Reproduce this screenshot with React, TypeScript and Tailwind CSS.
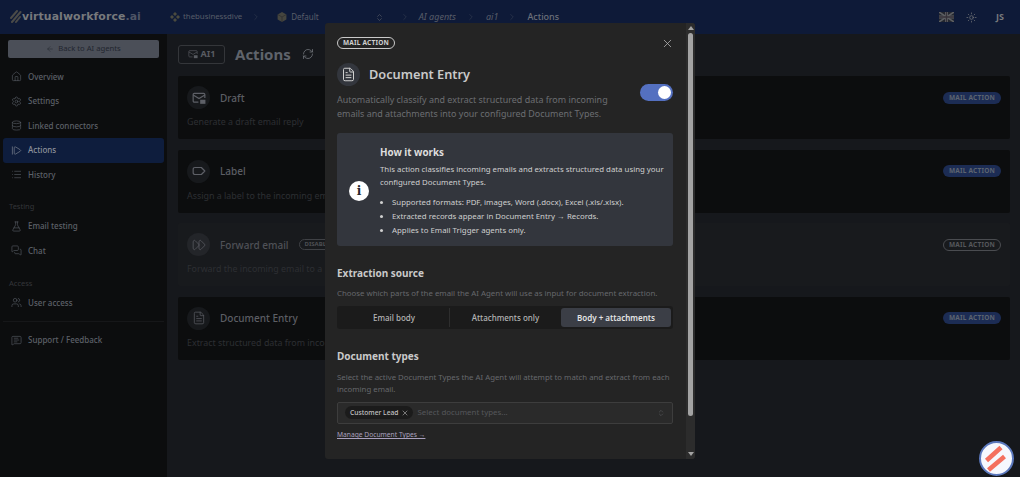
import React from 'react';
import {
  ArrowLeft,
  ChevronRight,
  ChevronsUpDown,
  Database,
  FastForward,
  FileText,
  FlaskConical,
  House,
  List,
  MessageSquareText,
  MessagesSquare,
  RefreshCw,
  Settings,
  StepForward,
  Sun,
  Users,
  X,
} from 'lucide-react';

type IconProps = { size?: number; strokeWidth?: number; className?: string };

function MailAiIcon({ size = 12, strokeWidth = 1.4, className }: IconProps) {
  return (
    <svg width={size} height={size} viewBox="0 0 24 24" fill="none" stroke="currentColor" strokeWidth={strokeWidth * 1.7} className={className}>
      <path d="M11 19H4a2 2 0 0 1-2-2V6a2 2 0 0 1 2-2h16a2 2 0 0 1 2 2v6" />
      <path d="M2 7l10 6 10-6" />
      <rect x="14" y="15" width="9" height="7" fill="currentColor" stroke="none" />
    </svg>
  );
}

function LabelIcon({ size = 12, strokeWidth = 1.4, className }: IconProps) {
  return (
    <svg width={size} height={size} viewBox="0 0 24 24" fill="none" stroke="currentColor" strokeWidth={strokeWidth * 1.7} className={className}>
      <path d="M5 6h11l6 6-6 6H5a3 3 0 0 1-3-3V9a3 3 0 0 1 3-3z" strokeLinejoin="round" />
    </svg>
  );
}

const navTop = [
  { label: 'Overview', icon: House },
  { label: 'Settings', icon: Settings },
  { label: 'Linked connectors', icon: Database },
  { label: 'Actions', icon: StepForward, active: true },
  { label: 'History', icon: List },
];

const cards = [
  { title: 'Draft', desc: 'Generate a draft email reply', icon: MailAiIcon },
  { title: 'Label', desc: 'Assign a label to the incoming email', icon: LabelIcon },
  { title: 'Forward email', desc: 'Forward the incoming email to a', icon: FastForward, disabled: true },
  { title: 'Document Entry', desc: 'Extract structured data from incoming emails', icon: FileText },
];

function NavRow({ label, icon: Icon, active }: { label: string; icon: React.ElementType; active?: boolean }) {
  return (
    <div className={`mx-[3px] flex h-[24.5px] items-center gap-[6px] rounded-[3px] pl-[8px] text-[8px] font-medium ${active ? 'bg-[#0e1d3d] text-[#8d929b]' : 'text-[#5c6068]'}`}>
      <Icon size={11} strokeWidth={1.3} className="shrink-0" />
      <span>{label}</span>
    </div>
  );
}

function Badge({ disabled }: { disabled?: boolean }) {
  return (
    <span className={`flex h-[12px] w-[58px] items-center justify-center rounded-full text-[6.5px] font-bold tracking-[0.2px] ${disabled ? 'border border-[#4a4c50] text-[#55575b]' : 'bg-[#1c2c54] text-[#5d6470]'}`}>
      MAIL ACTION
    </span>
  );
}

function UkFlag() {
  return (
    <svg width="15" height="10" viewBox="0 0 15 10" className="shrink-0">
      <rect width="15" height="10" fill="#23262e" />
      <path d="M0 0l15 10M15 0L0 10" stroke="#5d5f63" strokeWidth="1.6" />
      <path d="M7.5 0v10M0 5h15" stroke="#5d5f63" strokeWidth="3" />
      <path d="M7.5 0v10M0 5h15" stroke="#36323a" strokeWidth="1.4" />
    </svg>
  );
}

export default function App() {
  return (
    <div className="relative flex h-[477px] w-[1020px] flex-col overflow-hidden bg-[#16181c] font-['Noto_Sans',sans-serif]">
      {/* top bar */}
      <header className="flex h-[34px] shrink-0 items-center bg-[#0e1a38] text-[9px] text-[#585d68]">
        <div className="flex w-[170px] shrink-0 items-center pl-[10px]">
          <svg width="12" height="15" viewBox="0 0 12 15" className="shrink-0">
            <path d="M1 9l6-7M2 13l8.5-10M6 13l4-5" stroke="#4b4b48" strokeWidth="2" strokeLinecap="round" />
          </svg>
          <span className="font-['DejaVu_Sans',sans-serif] text-[10.9px] font-bold tracking-[0.1px] text-[#77797c]">
            virtualworkforce<span className="text-[#4e5565]">.ai</span>
          </span>
        </div>
        <svg width="10" height="10" viewBox="0 0 10 10" className="shrink-0 text-[#4a4a3e]" fill="currentColor">
          <path d="M5 0l2 2-2 2-2-2zM2 3l2 2-2 2-2-2zM8 3l2 2-2 2-2-2zM5 6l2 2-2 2-2-2z" />
        </svg>
        <span className="ml-[3px] text-[7.8px]">thebusinessdive</span>
        <ChevronRight size={10} strokeWidth={1.2} className="ml-[9px] text-[#3d4456]" />
        <svg width="10" height="10" viewBox="0 0 10 10" className="ml-[16px] shrink-0">
          <path d="M5 0l4.4 2.5v5L5 10 .6 7.5v-5z" fill="#46463f" />
          <path d="M1 2.7L5 5l4-2.3M5 5v5" stroke="#2c2d2e" strokeWidth=".7" fill="none" />
        </svg>
        <span className="ml-[4px] text-[8px]">Default</span>
        <ChevronsUpDown size={9} strokeWidth={1.6} className="ml-[56px] text-[#5c6068]" />
        <ChevronRight size={10} strokeWidth={1.2} className="ml-[16px] text-[#3d4456]" />
        <span className="ml-[9px] italic">AI agents</span>
        <ChevronRight size={10} strokeWidth={1.2} className="ml-[10px] text-[#3d4456]" />
        <span className="ml-[10px] italic">ai1</span>
        <ChevronRight size={10} strokeWidth={1.2} className="ml-[9px] text-[#3d4456]" />
        <span className="ml-[10px] font-medium text-[#6c707a]">Actions</span>
        <div className="ml-auto flex items-center pr-[16px]">
          <UkFlag />
          <Sun size={11} strokeWidth={1.5} className="ml-[12px] text-[#77797c]" />
          <span className="ml-[19px] text-[9px] font-bold text-[#77797c]">JS</span>
        </div>
      </header>

      <div className="flex min-h-0 flex-1">
        {/* sidebar */}
        <aside className="flex w-[167px] shrink-0 flex-col bg-[#0c0d0e] pt-[6px]">
          <div className="mx-[8px] mb-[6.5px] flex h-[18px] items-center justify-center gap-[4px] rounded-[2px] bg-[#4b4f58] text-[7.7px] text-[#22262f]">
            <ArrowLeft size={8} strokeWidth={1.5} />
            <span>Back to AI agents</span>
          </div>
          {navTop.map((n) => (
            <NavRow key={n.label} label={n.label} icon={n.icon} active={n.active} />
          ))}
          <div className="mb-[2px] mt-[13px] h-[12px] pl-[9px] text-[7.5px] leading-[12px] text-[#34363a]">Testing</div>
          <NavRow label="Email testing" icon={FlaskConical} />
          <NavRow label="Chat" icon={MessagesSquare} />
          <div className="mb-[2px] mt-[13.5px] h-[12px] pl-[9px] text-[7.5px] leading-[12px] text-[#34363a]">Access</div>
          <NavRow label="User access" icon={Users} />
          <div className="mx-[3px] my-[6px] h-px bg-[#161719]" />
          <NavRow label="Support / Feedback" icon={MessageSquareText} />
        </aside>

        {/* page */}
        <main className="min-w-0 flex-1 pl-[11px] pr-[10px] pt-[10px]">
          <div className="flex h-[20px] items-center">
            <span className="flex h-[19px] w-[47px] items-center justify-center gap-[3px] rounded-[3px] border border-[#34363a] text-[9px] font-bold text-[#595c62]">
              <MailAiIcon size={10} strokeWidth={0.9} />
              AI1
            </span>
            <h1 className="ml-[10px] text-[15px] font-bold text-[#5f636b]">Actions</h1>
            <RefreshCw size={12} strokeWidth={1.6} className="ml-[11px] text-[#70737a]" />
          </div>
          <div className="mt-[12px] flex flex-col gap-[10.5px]">
            {cards.map((c) => (
              <div key={c.title} className={`h-[63px] rounded-[2px] px-[9px] pt-[10px] ${c.disabled ? 'bg-[#181a1d]' : 'bg-[#0c0d0e]'}`}>
                <div className="flex h-[23px] items-center">
                  <span className={`flex h-[23px] w-[23px] items-center justify-center rounded-full ${c.disabled ? 'bg-[#232529]' : 'bg-[#17191c]'}`}>
                    <c.icon size={14} strokeWidth={1.2} className="text-[#5e6067]" />
                  </span>
                  <span className={`ml-[10px] mt-[1px] text-[10px] font-medium ${c.disabled ? 'text-[#4f5157]' : 'text-[#5c5e64]'}`}>{c.title}</span>
                  {c.disabled && (
                    <span className="ml-[10px] flex h-[11px] w-[50px] items-center rounded-full border border-[#3f4145] pl-[5px] text-[6px] font-bold text-[#4c4e52]">
                      DISABLED
                    </span>
                  )}
                  <div className="ml-auto">
                    <Badge disabled={c.disabled} />
                  </div>
                </div>
                <p className="mt-[6px] text-[8.9px] text-[#2d2f33]">{c.desc}</p>
              </div>
            ))}
          </div>
        </main>
      </div>

      {/* modal */}
      <div className="absolute left-[325px] top-[23px] flex h-[436px] w-[370px] overflow-hidden rounded-[3px] bg-[#242424]">
        <div className="min-w-0 flex-1 pl-[12px] pr-[13px] pt-[14px]">
          <div className="flex h-[12px] items-center justify-between">
            <span className="flex h-[12px] w-[58px] items-center justify-center rounded-full border border-[#c9c9c9] text-[6.5px] font-bold tracking-[0.2px] text-[#d0d0d0]">
              MAIL ACTION
            </span>
            <X size={13} strokeWidth={1.4} className="-mr-[1px] text-[#b9b9b9]" />
          </div>
          <div className="mt-[14px] flex h-[23px] items-center">
            <span className="flex h-[23px] w-[23px] items-center justify-center rounded-full bg-[#33363d]">
              <FileText size={15} strokeWidth={1.6} className="text-[#d0d0d0]" />
            </span>
            <span className="ml-[9px] text-[12.75px] font-semibold text-[#c9c9c9]">Document Entry</span>
          </div>
          <div className="mt-[7px] flex items-start justify-between">
            <p className="w-[290px] text-[8.95px] leading-[14px] text-[#6c6e72]">
              Automatically classify and extract structured data from incoming emails and attachments into your configured Document Types.
            </p>
            <span className="-mt-[9px] flex h-[17px] w-[33px] items-center justify-end rounded-full bg-[#5470c0] pr-[2px]">
              <span className="h-[13px] w-[13px] rounded-full bg-white" />
            </span>
          </div>
          <div className="mt-[12px] flex h-[113px] rounded-[3px] bg-[#33363d] pl-[12px] pr-[8px] pt-[12px]">
            <span className="mt-[36px] flex h-[20px] w-[20px] shrink-0 items-center justify-center rounded-full bg-white">
              <span className="font-['DejaVu_Serif',serif] text-[12px] font-bold leading-none text-[#26282d]">i</span>
            </span>
            <div className="ml-[11px] min-w-0 text-[7.83px] text-[#cfcfcf]">
              <h3 className="text-[9.8px] font-bold leading-[15px] text-[#dedede]">How it works</h3>
              <p className="mt-[2.5px] leading-[13px]">This action classifies incoming emails and extracts structured data using your configured Document Types.</p>
              <ul className="mt-[6px] list-disc pl-[12px] leading-[14px]">
                <li>Supported formats: PDF, images, Word (.docx), Excel (.xls/.xlsx).</li>
                <li>Extracted records appear in Document Entry → Records.</li>
                <li>Applies to Email Trigger agents only.</li>
              </ul>
            </div>
          </div>
          <h2 className="mt-[20px] text-[10px] font-bold leading-[15px] text-[#c9c9c9]">Extraction source</h2>
          <p className="mt-[5.5px] text-[7.85px] leading-[13px] text-[#66686c]">Choose which parts of the email the AI Agent will use as input for document extraction.</p>
          <div className="mt-[6.5px] flex h-[23px] items-center rounded-[3px] bg-[#1b1b1b] px-[2px] text-[8px] font-medium">
            <span className="flex h-[19px] w-[110px] items-center justify-center text-[#b4b4b4]">Email body</span>
            <span className="h-[19px] w-px bg-[#2e2e2e]" />
            <span className="flex h-[19px] w-[111px] items-center justify-center text-[#b4b4b4]">Attachments only</span>
            <span className="flex h-[19px] flex-1 items-center justify-center rounded-[3px] bg-[#3b3e46] font-semibold text-[#e4e4e4]">Body + attachments</span>
          </div>
          <h2 className="mt-[20px] text-[10px] font-bold leading-[15px] text-[#c9c9c9]">Document types</h2>
          <p className="mt-[6.5px] text-[7.8px] leading-[12.7px] text-[#66686c]">Select the active Document Types the AI Agent will attempt to match and extract from each incoming email.</p>
          <div className="mt-[6px] flex h-[22px] items-center rounded-[2px] border border-[#3d3d3d] bg-[#2a2a2a] pl-[7px] pr-[7px]">
            <span className="flex h-[13px] items-center gap-[3px] rounded-full bg-[#1b1b1b] pl-[5px] pr-[4px] text-[6.7px] font-medium text-[#c2c2c2]">
              Customer Lead
              <X size={8} strokeWidth={1.6} className="text-[#c9c9c9]" />
            </span>
            <span className="ml-[4px] text-[7.9px] text-[#55575b]">Select document types...</span>
            <ChevronsUpDown size={8} strokeWidth={1.4} className="ml-auto text-[#66686c]" />
          </div>
          <a className="mt-[5.5px] block text-[6.7px] leading-[12px] text-[#a9a0bd] underline">Manage Document Types →</a>
        </div>

        {/* scrollbar */}
        <div className="flex w-[9px] shrink-0 flex-col items-center bg-[#2c2c2c] pb-[3px] pt-[3px]">
          <span className="h-0 w-0 border-x-[3px] border-b-[4px] border-x-transparent border-b-[#a3a3a3]" />
          <span className="mt-[3px] h-[383px] w-[5px] rounded-full bg-[#a3a3a3]" />
          <span className="mt-auto h-0 w-0 border-x-[3px] border-t-[4px] border-x-transparent border-t-[#a3a3a3]" />
        </div>
      </div>

      {/* support widget */}
      <div className="absolute bottom-[1px] right-[6px] flex h-[35px] w-[35px] items-center justify-center rounded-full border-2 border-[#5b78bd] bg-[#f6f8fe]">
        <svg width="31" height="31" viewBox="-15.5 -15.5 31 31">
          <path d="M-10 2L4.5-11M-8 11.5L8-2" stroke="#f4705f" strokeWidth="4.6" />
        </svg>
      </div>
    </div>
  );
}
